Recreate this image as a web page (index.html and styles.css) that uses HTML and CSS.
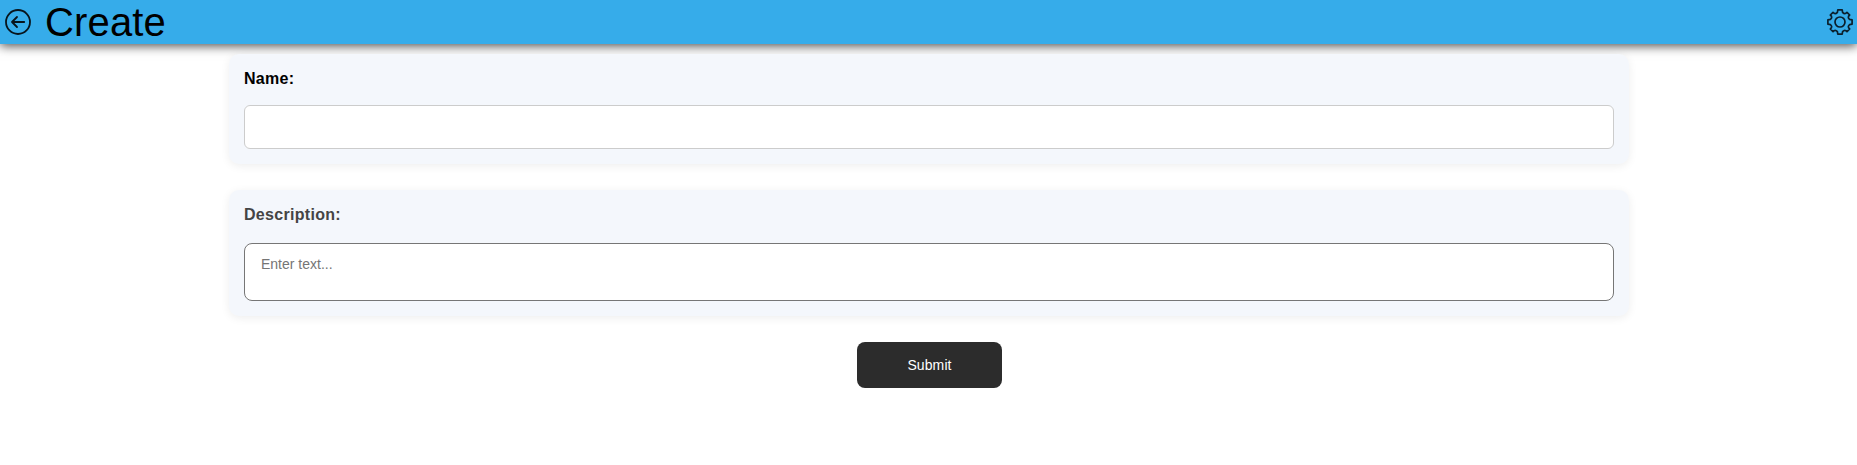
FILE: index.html
```html
<!DOCTYPE html>
<html lang="en">
<head>
<meta charset="utf-8">
<title>Create</title>
<link rel="stylesheet" href="styles.css">
</head>
<body>
<header class="topbar">
  <svg class="icon" viewBox="0 0 26 26" fill="none" stroke="#08141c" stroke-width="1.8" stroke-linecap="round" stroke-linejoin="round">
    <circle cx="13" cy="13" r="12"/>
    <path d="M19.2 13H7M12 8L7 13l5 5"/>
  </svg>
  <h1 class="title">Create</h1>
  <svg class="icon" viewBox="0 0 26 26" fill="none" stroke="#0b1f2c" stroke-width="1.7" stroke-linejoin="round">
    <circle cx="13" cy="13" r="5"/>
    <path d="M10.8 .9H15.2L15.6 3.4Q17.9 6 20 3.3L22.7 6Q20 8.1 22.6 10.4L25.1 10.8V15.2L22.6 15.6Q20 17.9 22.7 20L20 22.7Q17.9 20 15.6 22.6L15.2 25.1H10.8L10.4 22.6Q8.1 20 6 22.7L3.3 20Q6 17.9 3.4 15.6L.9 15.2V10.8L3.4 10.4Q6 8.1 3.3 6L6 3.3Q8.1 6 10.4 3.4Z"/>
  </svg>
</header>
<main>
  <form class="form">
    <section class="card">
      <label class="label" for="name">Name:</label>
      <input class="input" id="name" type="text">
    </section>
    <section class="card">
      <label class="label label-muted" for="description">Description:</label>
      <textarea class="textarea" id="description" placeholder="Enter text..."></textarea>
    </section>
    <button class="submit" type="button">Submit</button>
  </form>
</main>
</body>
</html>
```
FILE: styles.css
```css
* { box-sizing: border-box; }
body {
  margin: 0;
  background: #fff;
  font-family: "Liberation Sans", Arial, sans-serif;
}
.topbar {
  display: flex;
  align-items: center;
  height: 44px;
  padding: 0 4px 0 5px;
  background: #36acea;
  box-shadow: 0 2px 10px rgba(0, 0, 0, .7);
}
.icon { width: 26px; height: 26px; flex: none; }
.title {
  flex: 1;
  margin: 0 0 0 14px;
  font-size: 40px;
  font-weight: 400;
  line-height: 44px;
  letter-spacing: .15px;
  color: #000;
}
.form {
  display: flex;
  flex-direction: column;
  align-items: center;
  gap: 26px;
  padding: 10px 0 0 1px;
}
.card {
  width: 1400px;
  padding: 15px;
  border-radius: 10px;
  background: #f4f7fc;
  box-shadow: 0 2px 10px rgba(0, 0, 0, .07);
}
.label {
  display: block;
  padding-top: 1px;
  margin-bottom: 17px;
  font-size: 16px;
  line-height: 18px;
  font-weight: 700;
  letter-spacing: .3px;
  color: #000;
}
.label-muted { color: #444; margin-bottom: 19px; }
.input, .textarea {
  display: block;
  width: 100%;
  background: #fff;
  font-family: inherit;
  font-size: 14px;
}
.input {
  height: 44px;
  border: 1px solid #ccc;
  border-radius: 6px;
}
.textarea {
  height: 58px;
  padding: 12px 16px;
  border: 1px solid #767676;
  border-radius: 8px;
  resize: none;
  overflow: hidden;
}
.textarea::placeholder { color: #757575; }
.submit {
  width: 145px;
  height: 46px;
  margin-left: 1px;
  padding: 0;
  border: 0;
  border-radius: 8px;
  background: #2c2c2c;
  color: #fff;
  font-family: inherit;
  font-size: 14px;
  letter-spacing: .1px;
}
```
